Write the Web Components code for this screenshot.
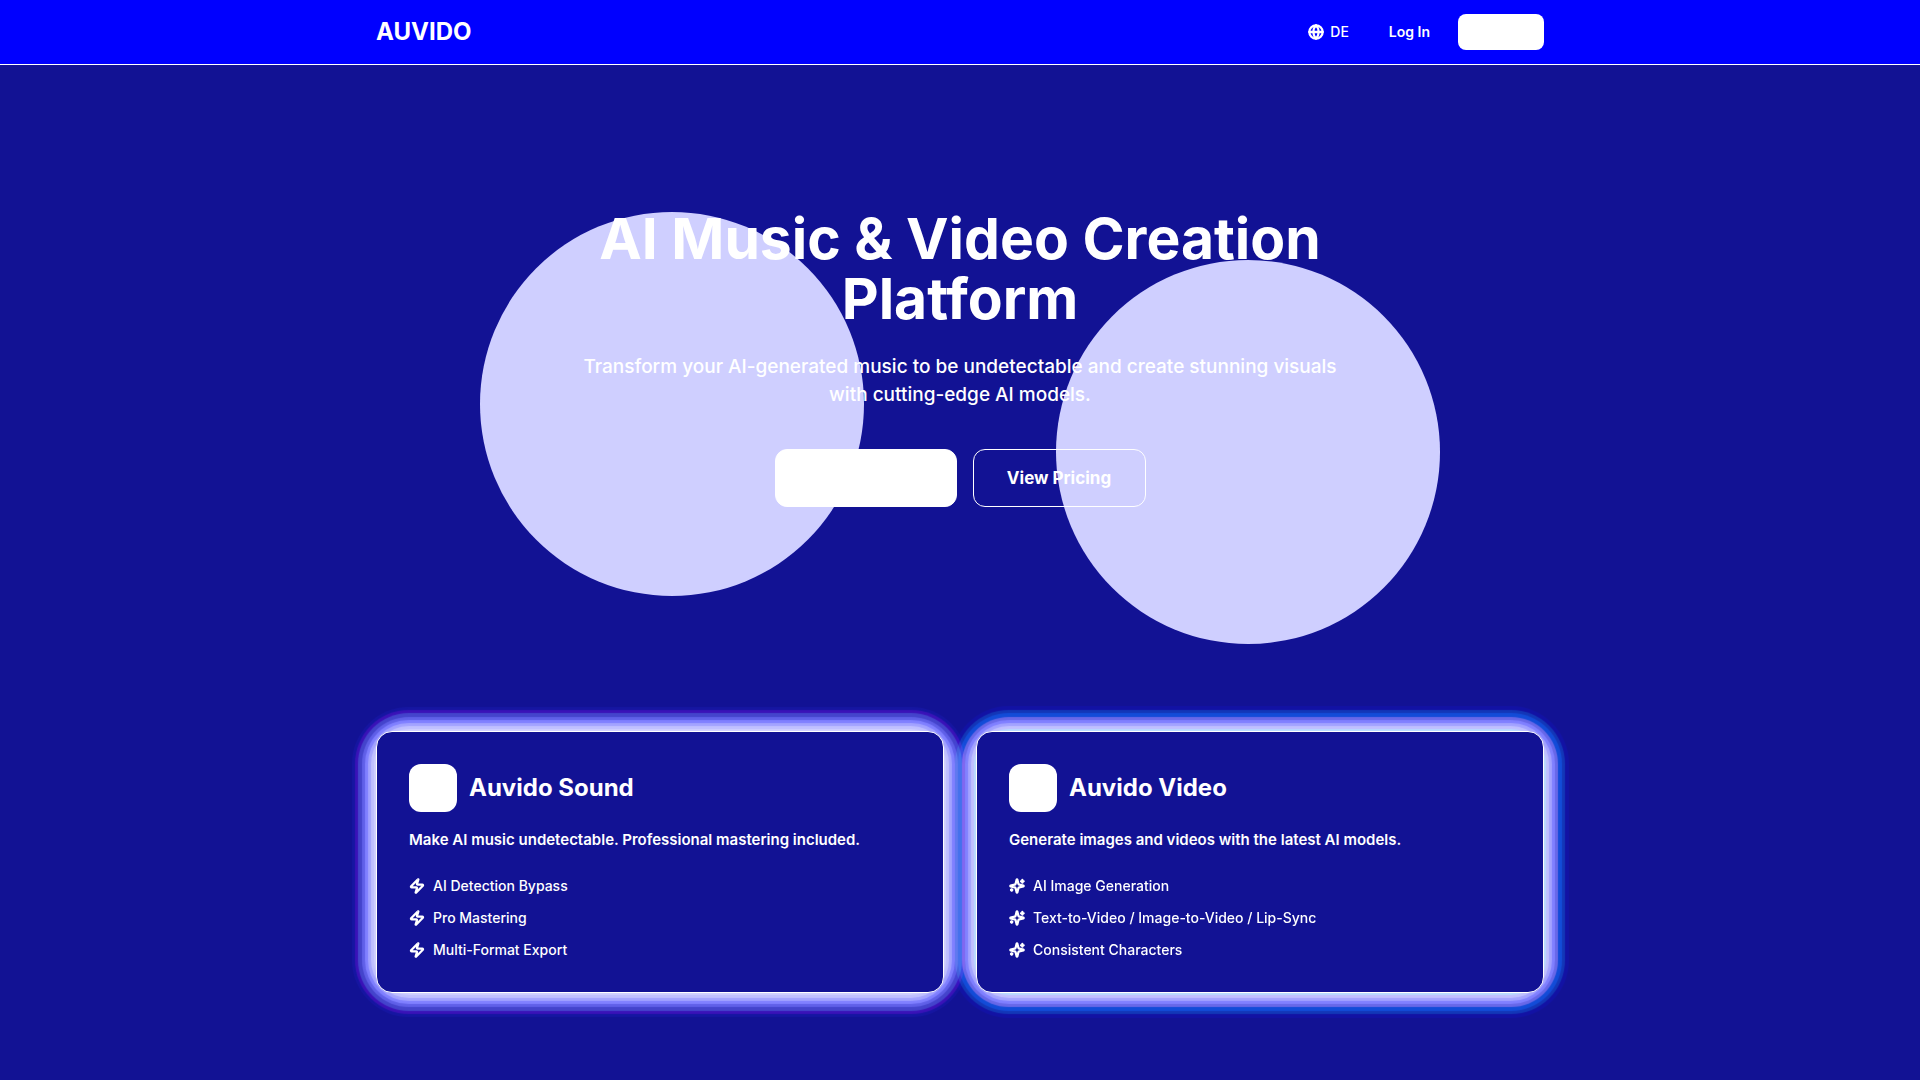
<!DOCTYPE html>
<html lang="en">
<head>
<meta charset="UTF-8">
<meta name="viewport" content="width=device-width, initial-scale=1.0">
<title>Auvido</title>
<style>
  body {
    --page-bg: #121294;
    margin: 0;
    min-height: 100vh;
    background: var(--page-bg);
    color: #fff;
    font-family: Inter, "Liberation Sans", sans-serif;
  }
</style>
</head>
<body>
<auvido-header></auvido-header>
<main>
  <auvido-hero>
    <span slot="title">AI Music &amp; Video Creation Platform</span>
    <span slot="lead">Transform your AI-generated music to be undetectable and create stunning visuals with cutting-edge AI models.</span>
  </auvido-hero>
  <product-grid>
    <product-card tone="sound" icon="zap" items="AI Detection Bypass|Pro Mastering|Multi-Format Export">
      <span slot="name">Auvido Sound</span>
      <span slot="text">Make AI music undetectable. Professional mastering included.</span>
    </product-card>
    <product-card tone="video" icon="sparkles" items="AI Image Generation|Text-to-Video / Image-to-Video / Lip-Sync|Consistent Characters">
      <span slot="name">Auvido Video</span>
      <span slot="text">Generate images and videos with the latest AI models.</span>
    </product-card>
  </product-grid>
</main>
<script>
const ICONS = {
  globe: '<circle cx="12" cy="12" r="10"/><path d="M12 2a14.5 14.5 0 0 0 0 20 14.5 14.5 0 0 0 0-20"/><path d="M2 12h20"/>',
  zap: '<path d="M4 14a1 1 0 0 1-.78-1.63l9.9-10.2a.5.5 0 0 1 .86.46l-1.92 6.02A1 1 0 0 0 13 10h7a1 1 0 0 1 .78 1.63l-9.9 10.2a.5.5 0 0 1-.86-.46l1.92-6.02A1 1 0 0 0 11 14z"/>',
  sparkles: '<path d="M9.937 15.5A2 2 0 0 0 8.5 14.063l-6.135-1.582a.5.5 0 0 1 0-.962L8.5 9.936A2 2 0 0 0 9.937 8.5l1.582-6.135a.5.5 0 0 1 .963 0L14.063 8.5A2 2 0 0 0 15.5 9.937l6.135 1.581a.5.5 0 0 1 0 .964L15.5 14.063a2 2 0 0 0-1.437 1.437l-1.582 6.135a.5.5 0 0 1-.963 0z"/><path d="M20 3v4"/><path d="M22 5h-4"/><path d="M4 17v2"/><path d="M5 18H3"/>'
};

class AuvidoIcon extends HTMLElement {
  connectedCallback() {
    this.attachShadow({ mode: 'open' });
    this.shadowRoot.innerHTML = `
      <style>
        :host { display: block; flex: none; width: 16px; height: 16px; }
        svg {
          display: block;
          fill: none;
          stroke: currentColor;
          stroke-width: 3.4;
          stroke-linecap: round;
          stroke-linejoin: round;
        }
      </style>
      <svg width="16" height="16" viewBox="0 0 24 24" aria-hidden="true">${ICONS[this.getAttribute('name')]}</svg>
    `;
  }
}

class AuvidoHeader extends HTMLElement {
  connectedCallback() {
    this.attachShadow({ mode: 'open' });
    this.shadowRoot.innerHTML = `
      <style>
        :host {
          display: block;
          background: #00f;
          border-bottom: 1px solid #fff;
        }
        .bar {
          display: flex;
          align-items: center;
          justify-content: space-between;
          box-sizing: border-box;
          max-width: 1200px;
          height: 64px;
          margin: 0 auto;
          padding: 0 16px;
        }
        a { color: inherit; text-decoration: none; }
        .logo { font-size: 24px; line-height: 32px; font-weight: 700; }
        nav { display: flex; align-items: center; gap: 16px; }
        button {
          display: flex;
          align-items: center;
          gap: 6px;
          height: 36px;
          padding: 0 12px;
          border: 0;
          background: none;
          color: inherit;
          font: 500 14px/20px Inter, "Liberation Sans", sans-serif;
          cursor: pointer;
        }
        .login { padding: 0 12px; font-size: 14px; line-height: 20px; font-weight: 600; }
        .cta { width: 86px; border-radius: 8px; background: #fff; }
      </style>
      <div class="bar">
        <a class="logo" href="#">AUVIDO</a>
        <nav>
          <button type="button"><auvido-icon name="globe"></auvido-icon>DE</button>
          <a class="login" href="#">Log In</a>
          <button class="cta" type="button" aria-label="Sign up"></button>
        </nav>
      </div>
    `;
  }
}

class AuvidoHero extends HTMLElement {
  connectedCallback() {
    this.attachShadow({ mode: 'open' });
    this.shadowRoot.innerHTML = `
      <style>
        :host {
          display: block;
          position: relative;
          padding: 144px 16px;
          text-align: center;
        }
        .orb {
          position: absolute;
          width: 384px;
          height: 384px;
          border-radius: 50%;
          background: #cfcfff;
        }
        .orb.left { top: 25%; left: 25%; }
        .orb.right { top: 33.333%; right: 25%; }
        .content { position: relative; max-width: 800px; margin: 0 auto; }
        h1 { margin: 0 0 24px; font-size: 57px; line-height: 60px; font-weight: 700; }
        p { max-width: 768px; margin: 0 auto 40px; font-size: 19px; line-height: 28px; font-weight: 500; }
        .actions { display: flex; justify-content: center; gap: 16px; }
        button {
          box-sizing: border-box;
          height: 58px;
          padding: 0 32px;
          border: 1px solid #fff;
          border-radius: 12px;
          background: none;
          color: inherit;
          font: 700 17px/24px Inter, "Liberation Sans", sans-serif;
          cursor: pointer;
        }
        .primary { width: 182px; background: #fff; }
        .secondary { width: 173px; }
      </style>
      <div class="orb left"></div>
      <div class="orb right"></div>
      <div class="content">
        <h1><slot name="title"></slot></h1>
        <p><slot name="lead"></slot></p>
        <div class="actions">
          <button class="primary" type="button" aria-label="Get started"></button>
          <button class="secondary" type="button">View Pricing</button>
        </div>
      </div>
    `;
  }
}

class ProductGrid extends HTMLElement {
  connectedCallback() {
    this.attachShadow({ mode: 'open' });
    this.shadowRoot.innerHTML = `
      <style>
        :host {
          display: block;
          isolation: isolate;
          background: var(--page-bg);
        }
        .grid {
          display: grid;
          grid-template-columns: repeat(auto-fit, minmax(320px, 1fr));
          gap: 32px;
          box-sizing: border-box;
          max-width: 1200px;
          margin: 0 auto;
          padding: 80px 16px 64px;
        }
      </style>
      <div class="grid"><slot></slot></div>
    `;
  }
}

class ProductCard extends HTMLElement {
  connectedCallback() {
    const items = this.getAttribute('items').split('|');
    const icon = this.getAttribute('icon');
    this.attachShadow({ mode: 'open' });
    this.shadowRoot.innerHTML = `
      <style>
        :host {
          display: block;
          position: relative;
          padding: 32px;
          border: 1px solid #fff;
          border-radius: 16px;
          background: var(--page-bg);
        }
        /* sits under both cards, so neighbouring glows add up in the gap */
        .glow {
          position: absolute;
          inset: 0;
          z-index: -1;
          border-radius: 32px;
          box-shadow: ${this.glow()};
          mix-blend-mode: screen;
        }
        header { display: flex; align-items: center; gap: 12px; margin-bottom: 16px; }
        .badge { width: 48px; height: 48px; border-radius: 12px; background: #fff; }
        h2 { margin: 0; font-size: 24px; line-height: 32px; font-weight: 700; }
        p { margin: 0 0 24px; font-size: 15px; line-height: 24px; font-weight: 600; }
        ul { display: grid; gap: 12px; margin: 0; padding: 0; list-style: none; }
        li { display: flex; align-items: center; gap: 8px; font-size: 14px; line-height: 20px; font-weight: 500; }
      </style>
      <div class="glow"></div>
      <header><div class="badge"></div><h2><slot name="name"></slot></h2></header>
      <p><slot name="text"></slot></p>
      <ul>${items.map(item => `<li><auvido-icon name="${icon}"></auvido-icon>${item}</li>`).join('')}</ul>
    `;
  }

  // stepped glow: one ring per colour, the widest ring painted last
  glow() {
    const rings = {
      sound: [[3, '#ccccff'], [6, '#bbbbff'], [9, '#9c9cff'], [12, '#7676ff'], [15, '#5454c8'], [19, '#363685'], [22, '#2b0055'], [25, '#040420']],
      video: [[3, '#b4d8ff'], [6, '#bbbbff'], [9, '#9c9cff'], [12, '#7676ff'], [15, '#5c5cc8'], [19, '#003ea2'], [22, '#002855'], [26, '#000026']]
    };
    return rings[this.getAttribute('tone')].map(([size, color]) => `0 0 1px ${size}px ${color}`).join(', ');
  }
}

customElements.define('auvido-icon', AuvidoIcon);
customElements.define('auvido-header', AuvidoHeader);
customElements.define('auvido-hero', AuvidoHero);
customElements.define('product-grid', ProductGrid);
customElements.define('product-card', ProductCard);
</script>
</body>
</html>
